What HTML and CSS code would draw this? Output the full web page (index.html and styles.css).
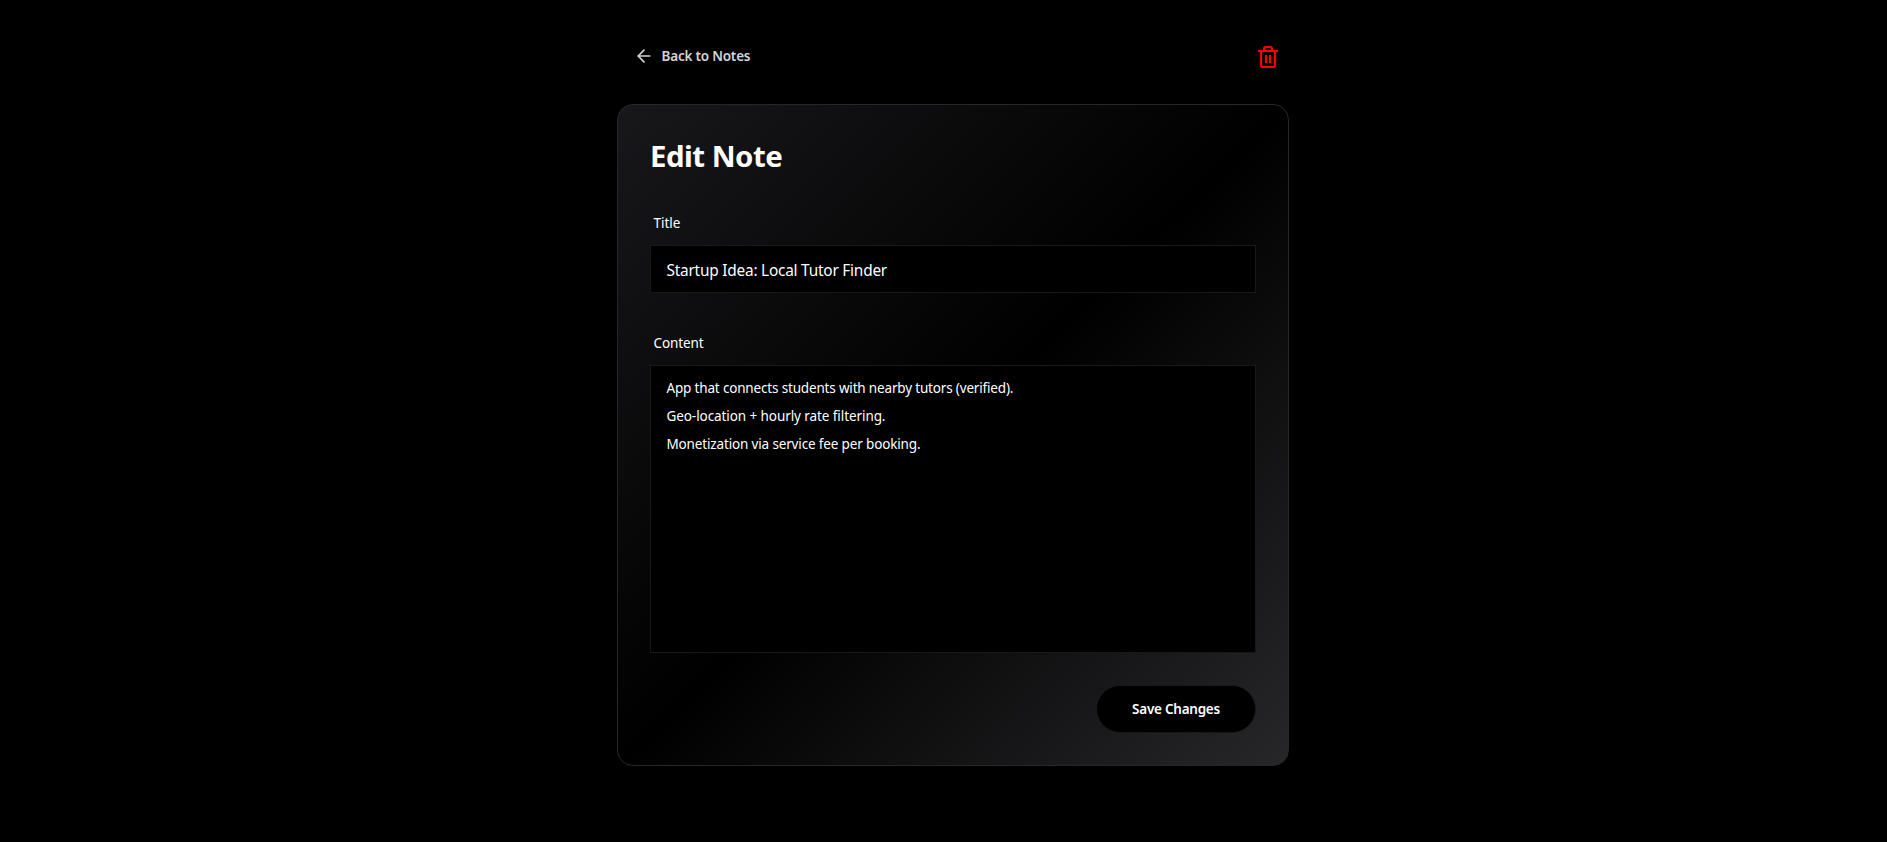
FILE: index.html
```html
<!DOCTYPE html>
<html lang="en">
<head>
<meta charset="utf-8">
<title>Edit Note</title>
<link rel="stylesheet" href="styles.css">
</head>
<body>
<main class="page">
  <header class="topbar">
    <a class="back">
      <svg class="back-icon" viewBox="0 0 24 24"><path d="m12 19-7-7 7-7"/><path d="M19 12H5"/></svg>
      <span class="back-text">Back to Notes</span>
    </a>
    <svg class="trash" viewBox="0 0 24 24"><path d="M3 6h18"/><path d="M19 6v14c0 1-1 2-2 2H7c-1 0-2-1-2-2V6"/><path d="M8 6V4c0-1 1-2 2-2h4c1 0 2 1 2 2v2"/><path d="M10 11v6"/><path d="M14 11v6"/></svg>
  </header>
  <section class="card">
    <h1 class="heading"><span>Edit Note</span></h1>
    <div class="label"><span class="label-title">Title</span></div>
    <div class="field"><span class="field-text">Startup Idea: Local Tutor Finder</span></div>
    <div class="label label-second"><span class="label-content">Content</span></div>
    <div class="area">
      <div><span class="line1">App that connects students with nearby tutors (verified).</span></div>
      <div><span class="line2">Geo-location + hourly rate filtering.</span></div>
      <div><span class="line3">Monetization via service fee per booking.</span></div>
    </div>
    <div class="actions"><div class="save"><span>Save Changes</span></div></div>
  </section>
</main>
</body>
</html>
```
FILE: styles.css
```css
* { box-sizing: border-box; }
body { margin: 0; background: #000; color: #fff; font: 13.5px/20px "Noto Sans", sans-serif; min-height: 842px; white-space: nowrap; }
.page { width: 672px; margin-left: 617px; padding-top: 36px; }
.topbar { display: flex; justify-content: space-between; height: 68px; padding: 0 9px 0 16.5px; }
.back { display: flex; align-items: center; gap: 8px; height: 40px; color: #d4d4d8; font-weight: 600; }
.back-icon { width: 20px; height: 20px; }
.back-text { letter-spacing: -0.2px; }
svg { fill: none; stroke: currentColor; stroke-width: 2; stroke-linecap: round; stroke-linejoin: round; }
.trash { width: 24px; height: 24px; margin-top: 9px; color: #f00; stroke-width: 2.2; stroke-linecap: square; }
.card { height: 662px; padding: 32px; border: 1px solid #27272a; border-radius: 16px; background: linear-gradient(to bottom right, #18181b, #000, #27272a); }
.heading { margin: 0 0 38px; font-size: 29.4px; line-height: 38px; font-weight: 700; letter-spacing: -0.5px; }
.label { height: 20px; margin-bottom: 12px; padding-left: 3.5px; }
.label-title { letter-spacing: -0.05px; }
.label-content { letter-spacing: -0.12px; }
.label-second { margin-top: 40px; }
.field { height: 48px; padding: 13px 15.5px 9px; border: 1px solid #18181b; background: #000; font-size: 15.4px; line-height: 24px; }
.field-text { letter-spacing: -0.22px; }
.area { height: 288px; padding: 8px 15.5px; border: 1px solid #18181b; background: #000; line-height: 28px; }
.line1 { letter-spacing: -0.17px; }
.line2 { letter-spacing: -0.08px; }
.line3 { letter-spacing: -0.15px; }
.actions { display: flex; justify-content: flex-end; margin-top: 32px; }
.save { display: flex; align-items: center; justify-content: center; width: 160px; height: 48px; border: 1px solid #18181b; border-radius: 24px; background: #000; font-weight: 600; letter-spacing: -0.25px; }
```
